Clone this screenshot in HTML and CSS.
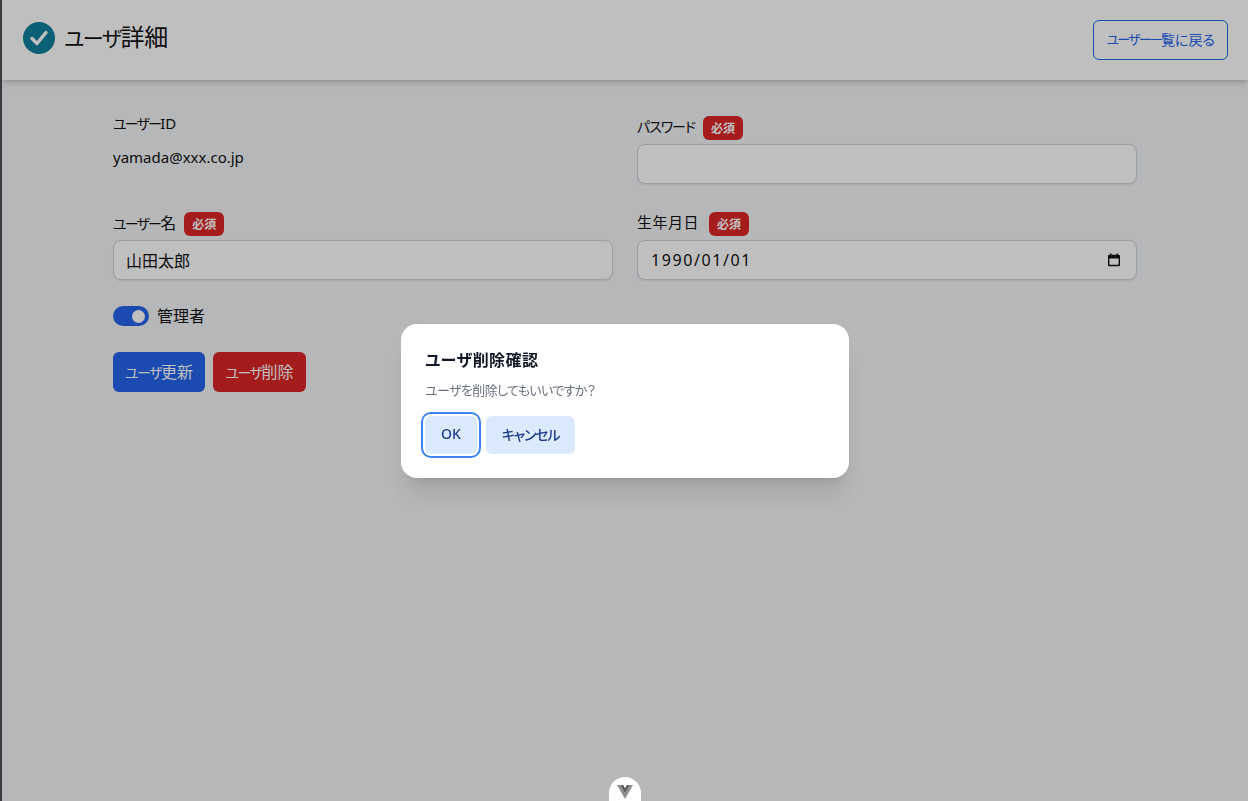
FILE: index.html
```html
<!DOCTYPE html>
<html lang="ja">

<head>
  <meta charset="utf-8">
  <title>ユーザ詳細</title>
  <link rel="stylesheet" href="styles.css">
</head>

<body>
  <header class="header">
    <div class="header-title">
      <svg class="header-icon" viewBox="0 0 32 32">
        <circle cx="16" cy="16" r="16" fill="#11809e" />
        <polyline points="9,16.5 14,21.5 23,10.5" fill="none" stroke="#fff" stroke-width="3.4" stroke-linecap="round" stroke-linejoin="round" />
      </svg>
      <h1><span class="title-kana">ユーザ</span>詳細</h1>
    </div>
    <a class="back-button" href="#"><span class="back-kana">ユーザー一</span>覧に戻る</a>
  </header>

  <main class="container">
    <form class="detail-form">
      <div class="form-grid">
        <div class="field">
          <div class="plain-label"><span class="kana kana-tight">ユーザー</span>ID</div>
          <div class="plain-value">yamada@xxx.co.jp</div>
        </div>
        <div class="field">
          <div class="field-label"><span class="label-text kana">パスワード</span> <span class="badge">必須</span></div>
          <input class="text-input" type="password">
        </div>
        <div class="field">
          <div class="field-label"><span class="label-text"><span class="kana kana-tight">ユーザー</span>名</span> <span class="badge">必須</span></div>
          <input class="text-input" type="text" value="山田太郎">
        </div>
        <div class="field">
          <div class="field-label"><span class="label-text label-kanji">生年月日</span> <span class="badge">必須</span></div>
          <div class="date-input">
            <span class="date-text">1990/01/01</span>
            <svg class="calendar-icon" viewBox="0 0 14 14">
              <path d="M1 3a1.200 1.200 0 0 1 1.200-1.200H3V.5h1.500v1.300h5V.5H11v1.300h.8A1.200 1.200 0 0 1 13 3v9a1.200 1.200 0 0 1-1.200 1.200H2.200A1.200 1.200 0 0 1 1 12zm1.400 2.600v6.200h9.200V5.600z" fill="#111" />
            </svg>
          </div>
        </div>
      </div>

      <div class="admin-row">
        <span class="toggle"><span class="toggle-knob"></span></span>
        <span class="admin-text">管理者</span>
      </div>

      <div class="form-buttons">
        <button class="btn btn-blue" type="button"><span class="kana">ユーザ</span>更新</button>
        <button class="btn btn-red" type="button"><span class="kana">ユーザ</span>削除</button>
      </div>
    </form>
  </main>

  <div class="overlay">
    <div class="dialog">
      <h2>ユーザ削除確認</h2>
      <p>ユーザを削除してもいいですか？</p>
      <div class="dialog-buttons">
        <button class="dialog-btn dialog-btn-focus" type="button">OK</button>
        <button class="dialog-btn dialog-btn-cancel" type="button">キャンセル</button>
      </div>
    </div>
  </div>

  <div class="devtools-tab">
    <svg viewBox="0 0 16 14" class="devtools-logo">
      <path d="M0 0h3.200L8 8.300 12.800 0H16L8 14z" fill="#8f8f8f" />
      <path d="M3.200 0h3L8 3.200 9.800 0h3L8 8.300z" fill="#5c5c5c" />
    </svg>
  </div>
</body>

</html>
```

FILE: styles.css
```css
* {
  box-sizing: border-box;
}
html, body {
  height: 100%;
}
body {
  margin: 0;
  background-color: #f3f4f6;
  border-left: 2px solid #3a3b40;
  color: #111;
  font-family: "Noto Sans", "Noto Sans CJK JP", sans-serif;
  font-size: 16px;
  font-feature-settings: "palt";
  overflow: hidden;
}
.kana {
  font-size: 14px;
  letter-spacing: -1px;
}
.kana-tight {
  letter-spacing: -1.8px;
}
.header {
  display: flex;
  align-items: center;
  justify-content: space-between;
  height: 80px;
  padding: 0 20px 0 21px;
  background-color: #fff;
  box-shadow: 0 4px 6px -1px rgba(0, 0, 0, 0.15), 0 2px 4px -2px rgba(0, 0, 0, 0.15);
}
.header-title {
  display: flex;
  align-items: center;
  gap: 10px;
  margin-bottom: 4px;
}
.header-icon {
  width: 32px;
  height: 32px;
}
h1 {
  margin: 0 0 2px -1px;
  font-size: 24px;
  font-weight: 400;
  line-height: 32px;
  letter-spacing: -0.2px;
}
.title-kana {
  font-size: 21px;
  letter-spacing: -1.5px;
}
.back-button {
  display: flex;
  align-items: center;
  height: 40px;
  padding: 0 12px 3px;
  border: 1px solid #2563eb;
  border-radius: 6px;
  color: #2563eb;
  font-size: 14px;
  text-decoration: none;
}
.back-kana {
  font-size: 13px;
  letter-spacing: -1.8px;
}
.container {
  width: 1024px;
  margin: 0 auto;
  padding-top: 32px;
}
.form-grid {
  display: grid;
  grid-template-columns: 1fr 1fr;
  gap: 24px;
}
.plain-label {
  margin-top: -1px;
  line-height: 24px;
  font-size: 15px;
}
.plain-value {
  margin-top: 9px;
  line-height: 24px;
  font-size: 15px;
}
.field-label {
  display: flex;
  align-items: center;
  gap: 8px;
  height: 32px;
}
.label-text {
  padding-bottom: 4px;
}
.label-kanji {
  padding-bottom: 6px;
  margin-right: 2px;
  font-size: 15px;
  letter-spacing: 0.5px;
}
.badge {
  display: flex;
  align-items: center;
  justify-content: center;
  width: 40px;
  height: 24px;
  border-radius: 6px;
  background-color: #dc2626;
  color: #fff;
  font-size: 12px;
  font-weight: 700;
}
.text-input, .date-input {
  display: flex;
  align-items: center;
  justify-content: space-between;
  width: 100%;
  height: 40px;
  padding: 0 12px;
  border: 1px solid #d1d5db;
  border-radius: 8px;
  background-color: #fff;
  color: #111;
  font-family: inherit;
  font-size: 16px;
  font-feature-settings: "palt";
  box-shadow: 0 1px 2px rgba(0, 0, 0, 0.08);
}
.date-text {
  margin-left: 1px;
  letter-spacing: 1.6px;
}
.calendar-icon {
  width: 14px;
  height: 14px;
  margin-right: 3px;
}
.admin-row {
  display: flex;
  align-items: center;
  gap: 8px;
  height: 24px;
  margin-top: 24px;
}
.admin-text {
  padding-bottom: 2px;
}
.toggle {
  display: flex;
  align-items: center;
  justify-content: flex-end;
  width: 36px;
  height: 20px;
  padding-right: 4px;
  border-radius: 10px;
  background-color: #2563eb;
}
.toggle-knob {
  width: 13px;
  height: 13px;
  border-radius: 50%;
  background-color: #fff;
}
.form-buttons {
  display: flex;
  gap: 8px;
  margin-top: 24px;
}
.btn {
  width: 92px;
  height: 40px;
  padding: 0 0 2px;
  border: none;
  border-radius: 6px;
  color: #fff;
  font-family: inherit;
  font-size: 16px;
  font-feature-settings: "palt";
}
.btn .kana {
  letter-spacing: -1.5px;
}
.btn-blue {
  background-color: #2563eb;
}
.btn-red {
  width: 93px;
  background-color: #dc2626;
}
.overlay {
  position: fixed;
  top: 0;
  right: 0;
  bottom: 0;
  left: 2px;
  display: flex;
  align-items: center;
  justify-content: center;
  background-color: rgba(0, 0, 0, 0.25);
}
.dialog {
  width: 448px;
  height: 154px;
  padding: 24px;
  border-radius: 16px;
  background-color: #fff;
  box-shadow: 0 20px 25px -5px rgba(0, 0, 0, 0.1), 0 8px 10px -6px rgba(0, 0, 0, 0.1);
}
h2 {
  margin: 0;
  color: #111827;
  font-size: 16px;
  font-weight: 700;
  line-height: 24px;
  letter-spacing: 0.4px;
}
.dialog p {
  margin: 8px 0 0;
  color: #6b7280;
  font-size: 13px;
  line-height: 20px;
  letter-spacing: -0.6px;
}
.dialog-buttons {
  display: flex;
  gap: 9px;
  margin-top: 16px;
}
.dialog-btn {
  height: 38px;
  padding: 0 0 2px;
  border: none;
  border-radius: 6px;
  background-color: #dbeafe;
  color: #1e3a8a;
  font-family: inherit;
  font-size: 14px;
  font-weight: 500;
  font-feature-settings: "palt";
}
.dialog-btn-focus {
  width: 52px;
  box-shadow: 0 0 0 2px #fff, 0 0 0 4px #3b82f6;
}
.dialog-btn-cancel {
  width: 89px;
  letter-spacing: -1.2px;
}
.devtools-tab {
  position: fixed;
  left: 609px;
  bottom: 0;
  display: flex;
  justify-content: center;
  width: 32px;
  height: 24px;
  padding-top: 8px;
  border-radius: 16px 16px 0 0;
  background-color: #fff;
}
.devtools-logo {
  width: 16px;
  height: 14px;
}
```
